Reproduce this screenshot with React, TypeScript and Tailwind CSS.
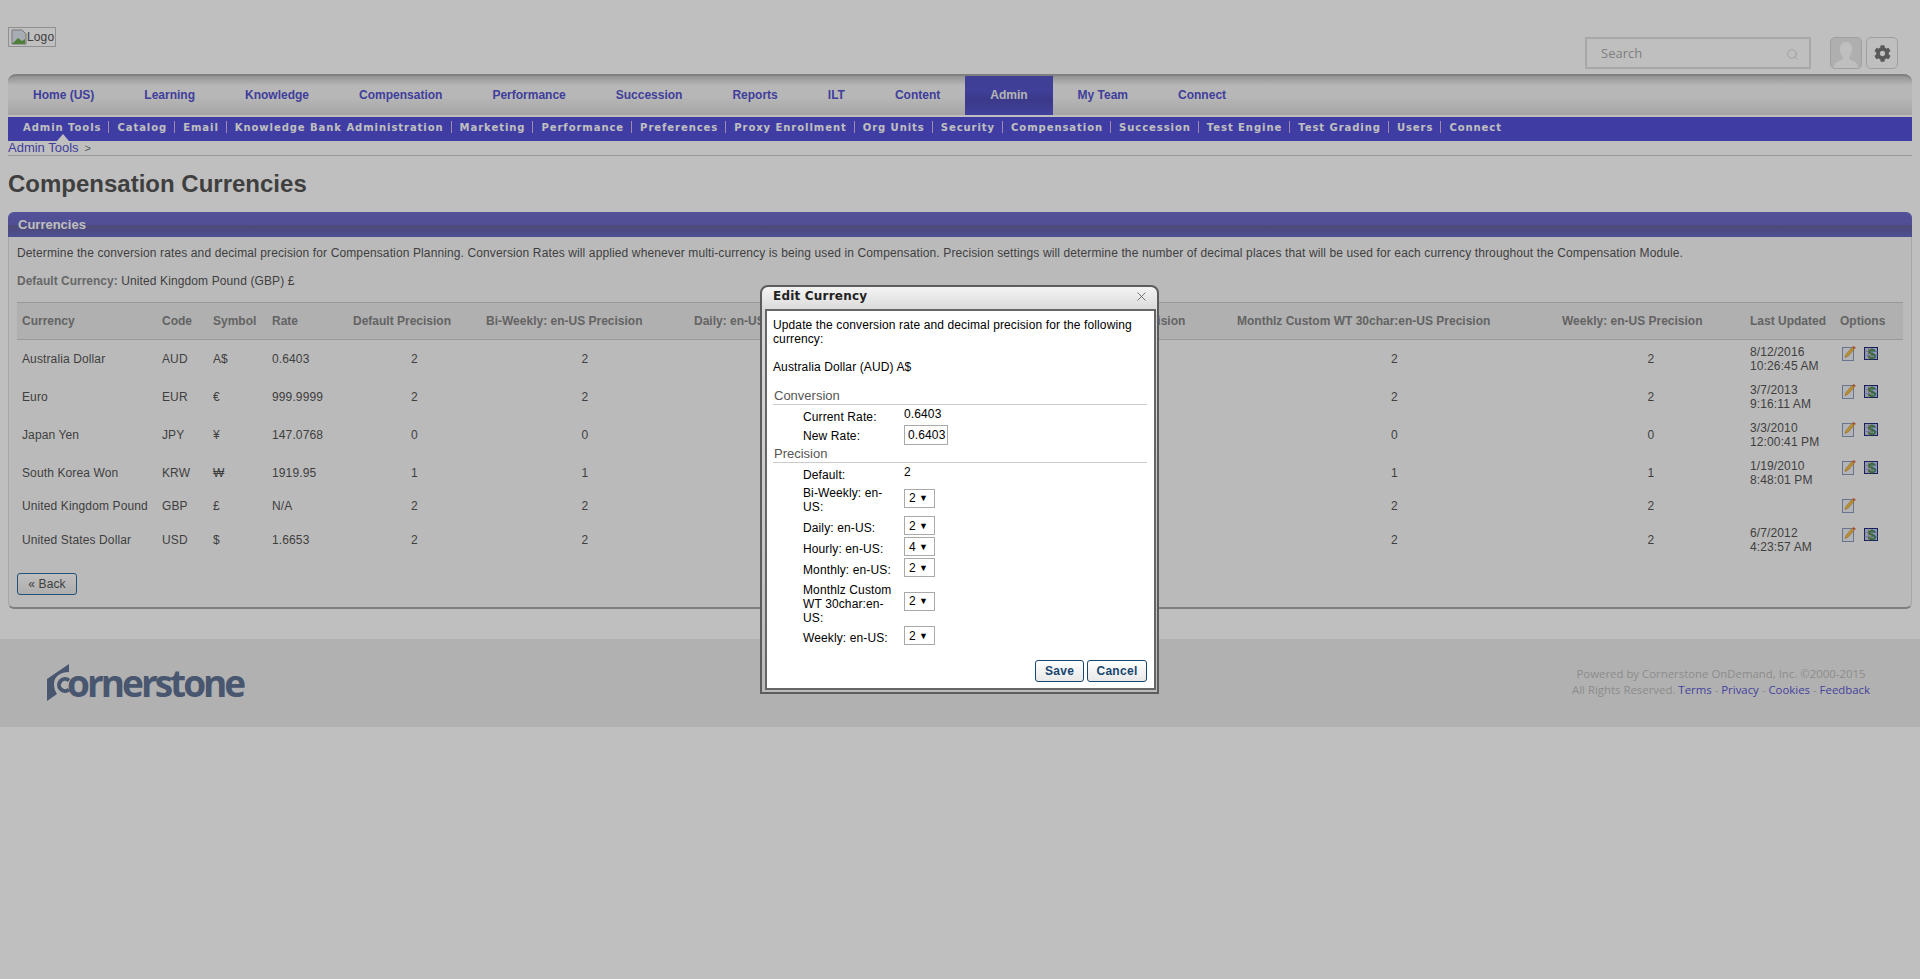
import { X, Search } from "lucide-react";
import { FaCog } from "react-icons/fa";

const navItems = ["Home (US)", "Learning", "Knowledge", "Compensation", "Performance", "Succession", "Reports", "ILT", "Content", "Admin", "My Team", "Connect"];
const subItems = ["Admin Tools", "Catalog", "Email", "Knowledge Bank Administration", "Marketing", "Performance", "Preferences", "Proxy Enrollment", "Org Units", "Security", "Compensation", "Succession", "Test Engine", "Test Grading", "Users", "Connect"];

const headers = ["Currency", "Code", "Symbol", "Rate", "Default Precision", "Bi-Weekly: en-US Precision", "Daily: en-US Precision", "Hourly: en-US Precision", "Monthly: en-US Precision", "Monthlz Custom WT 30char:en-US Precision", "Weekly: en-US Precision", "Last Updated", "Options"];

const rows = [
	{ name: "Australia Dollar", code: "AUD", sym: "A$", rate: "0.6403", p: "2", hourly: "4", d1: "8/12/2016", d2: "10:26:45 AM", h: "h-[38px]" },
	{ name: "Euro", code: "EUR", sym: "€", rate: "999.9999", p: "2", hourly: "2", d1: "3/7/2013", d2: "9:16:11 AM", h: "h-[38px]" },
	{ name: "Japan Yen", code: "JPY", sym: "¥", rate: "147.0768", p: "0", hourly: "0", d1: "3/3/2010", d2: "12:00:41 PM", h: "h-[38px]" },
	{ name: "South Korea Won", code: "KRW", sym: "₩", rate: "1919.95", p: "1", hourly: "1", d1: "1/19/2010", d2: "8:48:01 PM", h: "h-[38px]" },
	{ name: "United Kingdom Pound", code: "GBP", sym: "£", rate: "N/A", p: "2", hourly: "2", d1: "", d2: "", h: "h-[29px]" },
	{ name: "United States Dollar", code: "USD", sym: "$", rate: "1.6653", p: "2", hourly: "2", d1: "6/7/2012", d2: "4:23:57 AM", h: "h-[39px]" },
];

const precisions = [
	{ label: "Bi-Weekly: en-US:", value: "2", row: "items-center", sel: "-mt-[4px]" },
	{ label: "Daily: en-US:", value: "2", row: "items-end mt-[2px]", sel: "" },
	{ label: "Hourly: en-US:", value: "4", row: "items-end mt-[2px]", sel: "" },
	{ label: "Monthly: en-US:", value: "2", row: "items-end mt-[2px]", sel: "" },
	{ label: "Monthlz Custom WT 30char:en-US:", value: "2", row: "items-center mt-[6px]", sel: "-mt-[6px]" },
	{ label: "Weekly: en-US:", value: "2", row: "items-end mt-px", sel: "" },
];

function EditIcon() {
	return (
		<svg width="14" height="15" viewBox="0 0 14 15" className="block">
			<rect x="0.5" y="1.5" width="11" height="13" fill="#eef1f7" stroke="#8d9dbb" />
			<path d="M3 11.500l1-3 6-7 2.200 1.600-6 7z" fill="#f5c242" stroke="#c9862a" strokeWidth="0.6" />
			<path d="M10.500 1l1-1 2.300 1.700-1 1.300z" fill="#e2603a" />
		</svg>
	);
}

function MoneyIcon() {
	return (
		<svg width="14" height="16" viewBox="0 0 14 16" className="block">
			<rect x="0.500" y="1.500" width="13" height="12" fill="#c4cbe8" stroke="#23287a" />
			<path d="M0.500 5.500h13M0.500 9.500h13M4.500 1.500v12" stroke="#8f98c8" strokeWidth="0.7" />
			<text x="8" y="12.500" textAnchor="middle" fontSize="15" fontWeight="700" fontFamily="Liberation Sans, sans-serif" fill="#4b8a4b">$</text>
		</svg>
	);
}

function Select({ value, className }: { value: string; className: string }) {
	return (
		<div className={`w-[31px] h-[19px] shrink-0 border border-[#a9a9a9] bg-white flex items-center justify-between pl-[4px] pr-[6px] text-[12px] text-black ${className}`}>
			<span>{value}</span>
			<span className="text-[9px]">▼</span>
		</div>
	);
}

function FooterLink({ children }: { children: string }) {
	return <a className="text-[#5a58d0]">{children}</a>;
}

export default function App() {
	return (
		<div className="relative min-h-[979px] bg-white text-[12px] tracking-[0.12px] text-[#555] font-['Liberation_Sans',Arial,sans-serif]">
			<div className="px-2">
				{/* top strip */}
				<div className="flex justify-between h-[74px] pt-[27px]">
					<div className="w-[48px] h-[20px] border border-[#c0c0c0] flex items-center text-[12px] text-[#555] pl-[2px]">
						<svg width="16" height="16" viewBox="0 0 16 16" className="shrink-0">
							<path d="M1 1h10l4 4v10H1z" fill="#dfe6f2" stroke="#a0a0a0" />
							<path d="M1 15l6-6 4 3 3-2v5z" fill="#6aa84f" />
						</svg>
						Logo
					</div>
					<div className="flex mt-[10px] h-[32px] pr-[14px]">
						<div className="w-[226px] border-2 border-[#e0e0e0] flex items-center justify-between pt-[2px] pl-[14px] pr-[10px] text-[#aaa] text-[13px] tracking-normal font-['Open_Sans',sans-serif]">
							<span>Search</span>
							<Search size={13} strokeWidth={1.25} className="text-[#c4c4c4]" />
						</div>
						<div className="ml-[19px] w-[32px] border border-[#d4d4d4] rounded-[5px] bg-[#eaeaea] overflow-hidden flex items-end justify-center">
							<svg width="26" height="27" viewBox="0 0 26 27">
								<path d="M13 1c4 0 6 3 6 7 0 3-1 6-3 8v2c3 2 8 3 9 7v2H1v-2c1-4 6-5 9-7v-2c-2-2-3-5-3-8 0-4 2-7 6-7z" fill="#fff" />
							</svg>
						</div>
						<div className="ml-[4px] w-[32px] border border-[#d4d4d4] rounded-[5px] flex items-center justify-center">
							<FaCog size={17} className="text-[#777]" />
						</div>
					</div>
				</div>

				{/* main nav */}
				<div className="flex h-[41px] rounded-t-[8px] border-t-2 border-[#aaa] tracking-normal bg-[linear-gradient(#c4c4c4,#f6f6f6_25%,#f4f4f4_55%,#dcdcdc)]">
					{navItems.map((item) => (
						<a key={item} className={item === "Admin" ? "flex items-center pb-[2px] px-[25px] font-bold text-[#f0f0f0] bg-[linear-gradient(#5755c8,#5553cc_40%,#4f4db8_60%,#5755d0)]" : "flex items-center pb-[2px] px-[25px] font-bold text-[#5553cf]"}>
							{item}
						</a>
					))}
				</div>

				{/* sub nav */}
				<div className="mt-[2px] h-[24px] bg-[#5552da] flex items-start pt-[4px] pl-[7px] relative">
					{subItems.map((item, i) => (
						<a key={i} className={`h-[12px] flex items-center pl-[8px] pr-[7px] font-['DejaVu_Sans',sans-serif] font-bold text-[10px] tracking-[0.95px] text-white ${i < subItems.length - 1 ? "border-r border-[#d8b8e8]" : ""}`}>
							{item}
						</a>
					))}
					<div className="absolute left-[49px] bottom-0 w-0 h-0 border-x-[6px] border-x-transparent border-b-[7px] border-b-white" />
				</div>

				{/* breadcrumb */}
				<div className="h-[14px] border-b border-[#ccc] box-content flex items-center text-[13px] tracking-normal text-[#5553cf] leading-[14px]">
					Admin Tools<span className="ml-[6px] text-[#777] text-[11px]">&gt;</span>
				</div>

				<h1 className="mt-[12px] h-[32px] text-[24px] tracking-normal leading-[32px] font-bold text-[#555]">Compensation Currencies</h1>

				{/* currencies panel */}
				<div className="mt-[12px] border-b-2 border-x border-[#c4c4c4] border-b-[#a8a8a8] border-x-[#e0e0e0] rounded-[6px] bg-[#f9f9f9] h-[397px]">
					<div className="-mx-px h-[25px] rounded-t-[6px] bg-[linear-gradient(#6f6dcc,#6b69c6_50%,#65639f_55%,#6a68c4)] text-white font-bold text-[13px] tracking-normal leading-[25px] pl-[10px]">Currencies</div>
					<div className="px-[8px]">
						<p className="mt-[9px] leading-[14px]">Determine the conversion rates and decimal precision for Compensation Planning. Conversion Rates will applied whenever multi-currency is being used in Compensation. Precision settings will determine the number of decimal places that will be used for each currency throughout the Compensation Module.</p>
						<p className="mt-[14px] leading-[14px]"><span className="text-[#8a8a8a] font-bold tracking-normal">Default Currency:</span> United Kingdom Pound (GBP) £</p>
						<table className="mt-[14px] w-[1886px] table-fixed border-collapse text-left">
							<colgroup>
								<col className="w-[140px]" />
								<col className="w-[51px]" />
								<col className="w-[59px]" />
								<col className="w-[81px]" />
								<col className="w-[133px]" />
								<col className="w-[208px]" />
								<col className="w-[191px]" />
								<col className="w-[155px]" />
								<col className="w-[197px]" />
								<col className="w-[325px]" />
								<col className="w-[188px]" />
								<col className="w-[90px]" />
								<col className="w-[68px]" />
							</colgroup>
							<thead>
								<tr className="h-[37px] bg-[#ebebeb] border-y border-[#ccc] text-[#858585] font-bold">
									{headers.map((h) => (
										<th key={h} className="px-[5px] font-bold tracking-normal whitespace-nowrap">{h}</th>
									))}
								</tr>
							</thead>
							<tbody>
								{rows.map((r) => (
									<tr key={r.code} className={r.h}>
										<td className="px-[5px] whitespace-nowrap">{r.name}</td>
										<td className="px-[5px]">{r.code}</td>
										<td className="px-[5px]">{r.sym}</td>
										<td className="px-[5px]">{r.rate}</td>
										<td className="text-center">{r.p}</td>
										<td className="text-center">{r.p}</td>
										<td className="text-center">{r.p}</td>
										<td className="text-center">{r.hourly}</td>
										<td className="text-center">{r.p}</td>
										<td className="text-center">{r.p}</td>
										<td className="text-center">{r.p}</td>
										<td className="px-[5px] leading-[14px]">{r.d1}<br />{r.d2}</td>
										<td className="px-[7px] align-top pt-[6px]">
											<div className="flex gap-[8px]">
												<EditIcon />
												{r.d1 && <MoneyIcon />}
											</div>
										</td>
									</tr>
								))}
							</tbody>
						</table>
						<button className="mt-[13px] block w-[60px] h-[22px] border border-[#2f6c9f] rounded-[3px] bg-[linear-gradient(#fff,#e8e8e8)] text-[12px] text-[#555]">« Back</button>
					</div>
				</div>
			</div>

			{/* footer */}
			<div className="mt-[30px] h-[88px] bg-[#ededed] flex items-center justify-between pl-[46px] pr-[50px] tracking-normal">
				<div className="flex items-center text-[#617394]">
					<svg width="26" height="38" viewBox="0 0 26 38" className="shrink-0">
						<path d="M1 15 23 0v8C15 8 8 12 8 20c0 4 1 7 3 10L1 37z" fill="#617394" />
						<path d="M23 16.500A6 6 0 1 0 23 25.500" fill="none" stroke="#617394" strokeWidth="4" />
					</svg>
					<span className="font-['Open_Sans',sans-serif] font-bold text-[37px] leading-[38px] tracking-[-3px] -ml-[5px]">ornerstone</span>
				</div>
				<div className="text-center text-[11.4px] leading-[16px] pb-[2px] text-[#bbb] font-['Open_Sans',sans-serif]">
					<div>Powered by Cornerstone OnDemand, Inc. ©2000-2015</div>
					<div>All Rights Reserved. <FooterLink>Terms</FooterLink> - <FooterLink>Privacy</FooterLink> - <FooterLink>Cookies</FooterLink> - <FooterLink>Feedback</FooterLink></div>
				</div>
			</div>

			{/* dim layer */}
			<div className="absolute inset-0 bg-black/25" />

			{/* edit currency dialog */}
			<div className="absolute left-[760px] top-[285px] w-[399px] h-[409px] rounded-t-[8px] border-2 border-[#5c5c5c] bg-[linear-gradient(#f4f4f4,#d8d8d8_25px,#bbb)] pl-[3px] pr-px pb-[2px] flex flex-col">
				<div className="h-[22px] pb-[4px] flex items-center justify-between pl-[8px] pr-[7px] shrink-0">
					<span className="font-bold text-[12px] tracking-[0.2px] text-[#222] font-['DejaVu_Sans',sans-serif]">Edit Currency</span>
					<X size={15} strokeWidth={1.25} className="text-[#555]" />
				</div>
				<div className="flex-1 border-2 border-[#666] bg-white px-[6px] pt-[7px] text-[12px] leading-[14px] text-black">
					<p className="w-[376px]">Update the conversion rate and decimal precision for the following currency:</p>
					<p className="mt-[14px]">Australia Dollar (AUD) A$</p>
					<div className="mt-[15px] w-[374px] h-[16px] pl-px border-b border-[#ccc] text-[13px] tracking-normal text-[#555]">Conversion</div>
					<div className="flex pl-[30px] mt-[2px]">
						<div className="w-[101px] pt-[3px]">Current Rate:</div>
						<div>0.6403</div>
					</div>
					<div className="flex pl-[30px] mt-px items-center">
						<div className="w-[101px] pt-[2px]">New Rate:</div>
						<div className="w-[44px] h-[20px] border border-[#a9a9a9] pl-[3px] leading-[18px]">0.6403</div>
					</div>
					<div className="mt-[2px] w-[374px] h-[16px] pl-px border-b border-[#ccc] text-[13px] tracking-normal text-[#555]">Precision</div>
					<div className="flex pl-[30px] mt-[2px]">
						<div className="w-[101px] pt-[3px]">Default:</div>
						<div>2</div>
					</div>
					<div className="pl-[30px] mt-[4px] flex flex-col">
						{precisions.map((p) => (
							<div key={p.label} className={`flex ${p.row}`}>
								<div className="w-[90px] mr-[11px]">{p.label}</div>
								<Select value={p.value} className={p.sel} />
							</div>
						))}
					</div>
					<div className="mt-[15px] flex justify-end gap-[3px] w-[374px]">
						<button className="w-[49px] h-[22px] border border-[#17466e] rounded-[3px] bg-[linear-gradient(#fff,#e8e8e8)] text-[12px] tracking-[0.3px] font-bold text-[#17466e]">Save</button>
						<button className="w-[60px] h-[22px] border border-[#17466e] rounded-[3px] bg-[linear-gradient(#fff,#e8e8e8)] text-[12px] tracking-[0.3px] font-bold text-[#17466e]">Cancel</button>
					</div>
				</div>
			</div>
		</div>
	);
}
